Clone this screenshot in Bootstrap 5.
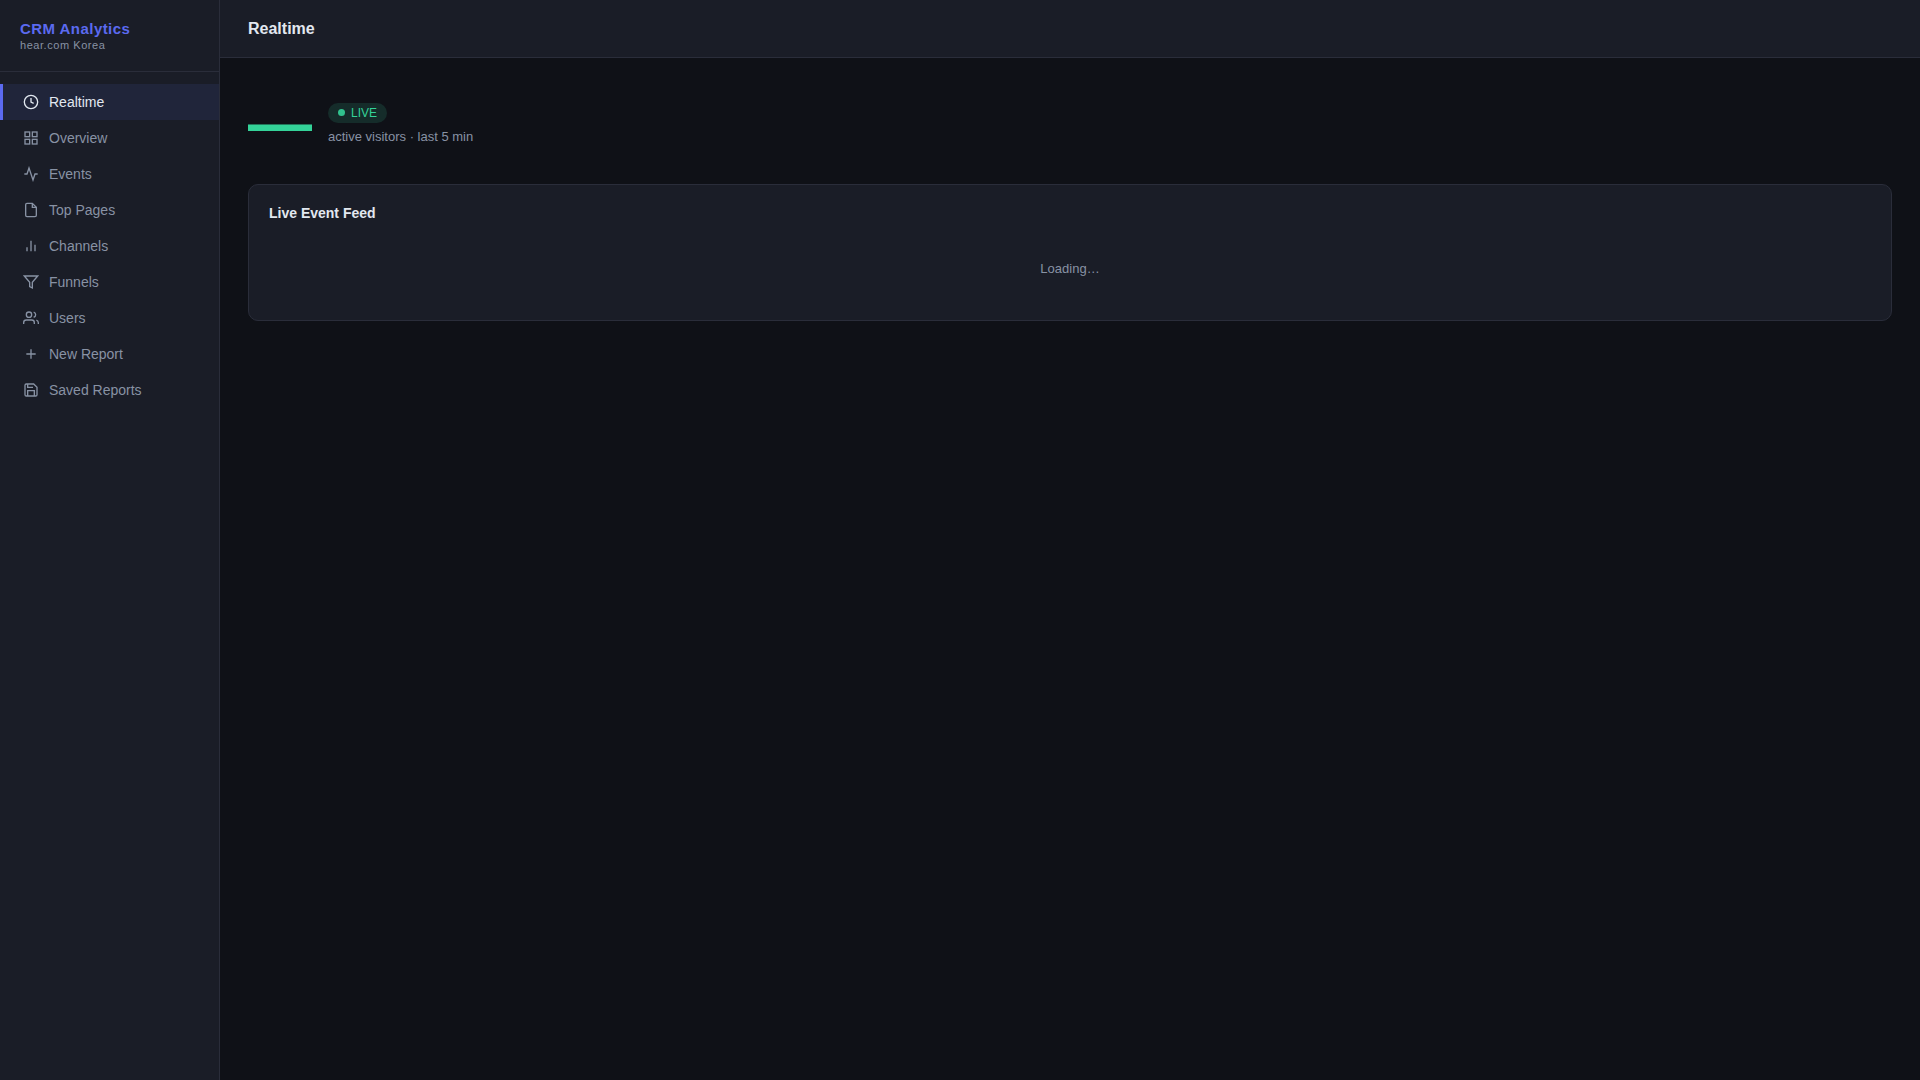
<!DOCTYPE html>
<html lang="en">
<head>
<meta charset="utf-8">
<meta name="viewport" content="width=device-width, initial-scale=1">
<title>CRM Analytics</title>
<link href="https://cdn.jsdelivr.net/npm/bootstrap@5.3.0/dist/css/bootstrap.min.css" rel="stylesheet">
<style>
:root { --surface: #1a1d27; --line: #2a2d3a; --accent: #5b6af0; --ink: #e2e8f0; --muted: #8892a4; --live: #34d399; }
body { background: #0f1117; color: var(--ink); font-family: "Liberation Sans", Arial, sans-serif; font-size: 14px; line-height: 16px; }
.sidebar { width: 220px; background: var(--surface); border-right: 1px solid var(--line); }
.brand { padding: 20px; border-bottom: 1px solid var(--line); }
.brand-name { font-size: 15px; line-height: 17px; letter-spacing: .03em; color: var(--accent); margin-bottom: 2px; }
.brand-sub { font-size: 11px; line-height: 12px; letter-spacing: .05em; color: var(--muted); }
.side-nav { padding: 12px 0; }
.side-nav .nav-link { display: flex; align-items: center; gap: 10px; padding: 10px 20px; border-left: 3px solid transparent; border-radius: 0; color: var(--muted); }
.side-nav .nav-link:hover { color: var(--ink); }
.side-nav .nav-link.active { background: #20253a; border-left-color: var(--accent); color: var(--ink); }
.side-nav svg { width: 16px; height: 16px; flex: none; fill: none; stroke: currentColor; stroke-width: 2; stroke-linejoin: miter; }
.topbar { padding: 20px 28px; background: var(--surface); border-bottom: 1px solid var(--line); }
.topbar h1 { font-size: 16px; line-height: 17px; }
.page { padding: 28px; }
.visitors { gap: 16px; margin-bottom: 24px; }
.visitor-count { font-size: 64px; line-height: 74px; color: var(--live); }
.live-pill { gap: 6px; padding: 3px 10px; font-size: 12px; line-height: 14px; color: var(--live); background: #152c2a; margin-bottom: 6px; }
.live-dot { width: 7px; height: 7px; background: var(--live); opacity: .9; }
.note { font-size: 13px; line-height: 15px; color: var(--muted); }
.feed { background: var(--surface); border: 1px solid var(--line); border-radius: 10px; padding: 20px; color: var(--ink); }
.feed h2 { font-size: 14px; line-height: 16px; margin-bottom: 16px; }
</style>
</head>
<body>
<div class="d-flex min-vh-100">
  <aside class="sidebar flex-shrink-0">
    <div class="brand">
      <div class="brand-name fw-bold">CRM Analytics</div>
      <div class="brand-sub">hear.com Korea</div>
    </div>
    <nav class="side-nav nav flex-column" aria-label="Main">
      <a class="nav-link active" aria-current="page" href="#realtime"><svg viewBox="0 0 24 24"><circle cx="12" cy="12" r="10"/><path d="M12 6v6l4 2"/></svg>Realtime</a>
      <a class="nav-link" href="#overview"><svg viewBox="0 0 24 24"><rect x="3" y="3" width="7" height="7"/><rect x="14" y="3" width="7" height="7"/><rect x="14" y="14" width="7" height="7"/><rect x="3" y="14" width="7" height="7"/></svg>Overview</a>
      <a class="nav-link" href="#events"><svg viewBox="0 0 24 24"><path d="M22 12h-4l-3 9L9 3l-3 9H2"/></svg>Events</a>
      <a class="nav-link" href="#pages"><svg viewBox="0 0 24 24"><path d="M14 2H6a2 2 0 0 0-2 2v16a2 2 0 0 0 2 2h12a2 2 0 0 0 2-2V8z"/><path d="M14 2v6h6"/></svg>Top Pages</a>
      <a class="nav-link" href="#channels"><svg viewBox="0 0 24 24"><path d="M18 20V10M12 20V4M6 20v-6"/></svg>Channels</a>
      <a class="nav-link" href="#funnels"><svg viewBox="0 0 24 24"><path d="M22 3H2l8 9.46V19l4 2v-8.54z"/></svg>Funnels</a>
      <a class="nav-link" href="#users"><svg viewBox="0 0 24 24"><path d="M17 21v-2a4 4 0 0 0-4-4H5a4 4 0 0 0-4 4v2"/><circle cx="9" cy="7" r="4"/><path d="M23 21v-2a4 4 0 0 0-3-3.87M16 3.13a4 4 0 0 1 0 7.75"/></svg>Users</a>
      <a class="nav-link" href="#new-report"><svg viewBox="0 0 24 24"><path d="M12 5v14M5 12h14"/></svg>New Report</a>
      <a class="nav-link" href="#saved-reports"><svg viewBox="0 0 24 24"><path d="M19 21H5a2 2 0 0 1-2-2V5a2 2 0 0 1 2-2h11l5 5v11a2 2 0 0 1-2 2z"/><path d="M17 21v-8H7v8M7 3v5h8"/></svg>Saved Reports</a>
    </nav>
  </aside>
  <div class="flex-grow-1">
    <header class="topbar"><h1 class="fw-bold m-0">Realtime</h1></header>
    <main class="page">
      <section class="visitors d-flex align-items-center">
        <div class="visitor-count fw-bold">—</div>
        <div>
          <div class="live-pill d-inline-flex align-items-center rounded-pill"><span class="live-dot rounded-circle"></span>LIVE</div>
          <div class="note">active visitors · last 5 min</div>
        </div>
      </section>
      <section class="feed card">
        <h2 class="fw-bold">Live Event Feed</h2>
        <div class="note text-center py-4">Loading…</div>
      </section>
    </main>
  </div>
</div>
<script src="https://cdn.jsdelivr.net/npm/bootstrap@5.3.0/dist/js/bootstrap.bundle.min.js"></script>
</body>
</html>
